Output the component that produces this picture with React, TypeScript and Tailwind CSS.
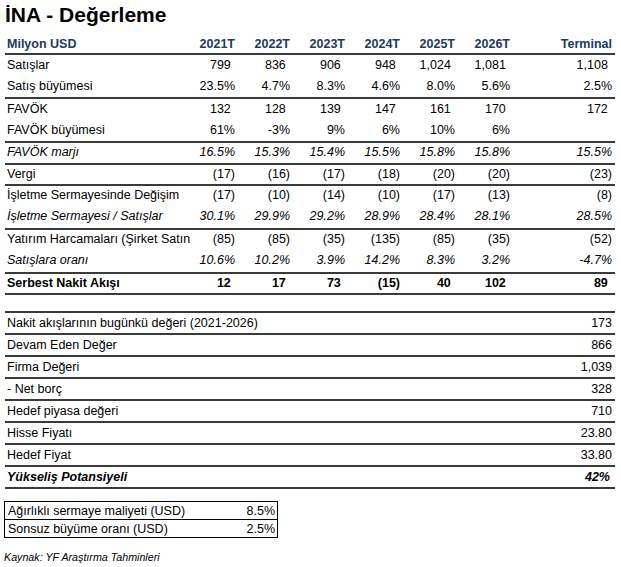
type Row = {
  label: string
  values: string[]
  terminal?: string
  style?: 'italic' | 'bold'
}

type Group = { rows: Row[]; h: string }

const YEARS = ['2021T', '2022T', '2023T', '2024T', '2025T', '2026T']

const GROUPS: Group[] = [
  {
    h: 'h-[21px] leading-[21px]',
    rows: [
      { label: 'Satışlar', values: ['799', '836', '906', '948', '1,024', '1,081'], terminal: '1,108' },
      { label: 'Satış büyümesi', values: ['23.5%', '4.7%', '8.3%', '4.6%', '8.0%', '5.6%'], terminal: '2.5%' },
    ],
  },
  {
    h: 'h-[21px] leading-[20px]',
    rows: [
      { label: 'FAVÖK', values: ['132', '128', '139', '147', '161', '170'], terminal: '172' },
      { label: 'FAVÖK büyümesi', values: ['61%', '-3%', '9%', '6%', '10%', '6%'] },
    ],
  },
  {
    h: 'h-[20px] leading-[18px]',
    rows: [
      { label: 'FAVÖK marjı', values: ['16.5%', '15.3%', '15.4%', '15.5%', '15.8%', '15.8%'], terminal: '15.5%', style: 'italic' },
    ],
  },
  {
    h: 'h-[19px] leading-[18px]',
    rows: [
      { label: 'Vergi', values: ['(17)', '(16)', '(17)', '(18)', '(20)', '(20)'], terminal: '(23)' },
    ],
  },
  {
    h: 'h-[21px] leading-[18px]',
    rows: [
      { label: 'İşletme Sermayesinde Değişim', values: ['(17)', '(10)', '(14)', '(10)', '(17)', '(13)'], terminal: '(8)' },
      { label: 'İşletme Sermayesi / Satışlar', values: ['30.1%', '29.9%', '29.2%', '28.9%', '28.4%', '28.1%'], terminal: '28.5%', style: 'italic' },
    ],
  },
  {
    h: 'h-[21px] leading-[18px]',
    rows: [
      { label: 'Yatırım Harcamaları (Şirket Satın', values: ['(85)', '(85)', '(35)', '(135)', '(85)', '(35)'], terminal: '(52)' },
      { label: 'Satışlara oranı', values: ['10.6%', '10.2%', '3.9%', '14.2%', '8.3%', '3.2%'], terminal: '-4.7%', style: 'italic' },
    ],
  },
  {
    h: 'h-[19px] leading-[18px]',
    rows: [
      { label: 'Serbest Nakit Akışı', values: ['12', '17', '73', '(15)', '40', '102'], terminal: '89', style: 'bold' },
    ],
  },
]

const SUMMARY: { label: string; value: string; strong?: boolean }[] = [
  { label: 'Nakit akışlarının bugünkü değeri (2021-2026)', value: '173' },
  { label: 'Devam Eden Değer', value: '866' },
  { label: 'Firma Değeri', value: '1,039' },
  { label: '- Net borç', value: '328' },
  { label: 'Hedef piyasa değeri', value: '710' },
  { label: 'Hisse Fiyatı', value: '23.80' },
  { label: 'Hedef Fiyat', value: '33.80' },
  { label: 'Yükseliş Potansiyeli', value: '42%', strong: true },
]

// accounting format: plain numbers leave room for a closing bracket
function Num({ v }: { v: string }) {
  const pad = !v.endsWith('%') && !v.endsWith(')')
  return (
    <span>
      {v}
      {pad && <span className="invisible">)</span>}
    </span>
  )
}

const GRID = 'grid grid-cols-[175px_repeat(6,55px)_105px]'

export default function App() {
  return (
    <div className="w-[621px] h-[567px] bg-white text-black font-['Liberation_Sans',Arial,sans-serif] overflow-hidden">
      <h1 className="pl-[5px] pt-[3px] text-[21px] leading-[24px] font-bold">İNA - Değerleme</h1>

      <div className="ml-[5px] w-[610px] mt-[7px] text-[12.5px]">
        <div className={`${GRID} h-[21px] leading-[20px] border-b-2 border-[#3a3a3a] font-bold text-[#203a60]`}>
          <div className="pl-[2px]">Milyon USD</div>
          {YEARS.map(y => (
            <div key={y} className="text-right">{y}</div>
          ))}
          <div className="text-right pr-[3px]">Terminal</div>
        </div>

        {GROUPS.map((g, gi) => (
          <div key={gi} className="border-b-2 border-[#3a3a3a]">
            {g.rows.map(r => (
              <div
                key={r.label}
                className={`${GRID} ${g.h} whitespace-nowrap ${
                  r.style === 'italic' ? 'italic' : r.style === 'bold' ? 'font-bold' : ''
                }`}
              >
                <div className="pl-[2px]">{r.label}</div>
                {r.values.map((v, i) => (
                  <div key={i} className="text-right">
                    <Num v={v} />
                  </div>
                ))}
                <div className="text-right pr-[3px]">{r.terminal ? <Num v={r.terminal} /> : null}</div>
              </div>
            ))}
          </div>
        ))}

        <div className="mt-[16px] border-t-2 border-[#3a3a3a]">
          {SUMMARY.map(s => (
            <div
              key={s.label}
              className={`flex justify-between h-[22px] leading-[21px] border-b-2 border-[#3a3a3a] ${
                s.strong ? 'font-bold italic' : ''
              }`}
            >
              <span className="pl-[2px]">{s.label}</span>
              <span className={s.strong ? 'pr-[5px]' : 'pr-[3px]'}>{s.value}</span>
            </div>
          ))}
        </div>
      </div>

      <div className="ml-[4px] mt-[12px] w-[274px] border border-black text-[12.5px]">
        <div className="flex justify-between h-[18px] leading-[18px] border-b border-black pl-[3px] pr-[2px]">
          <span>Ağırlıklı sermaye maliyeti (USD)</span>
          <span>8.5%</span>
        </div>
        <div className="flex justify-between h-[17px] leading-[18px] pl-[3px] pr-[2px]">
          <span>Sonsuz büyüme oranı (USD)</span>
          <span>2.5%</span>
        </div>
      </div>

      <p className="ml-[4px] mt-[13px] text-[10.7px] leading-[12px] italic">Kaynak: YF Araştırma Tahminleri</p>
    </div>
  )
}
